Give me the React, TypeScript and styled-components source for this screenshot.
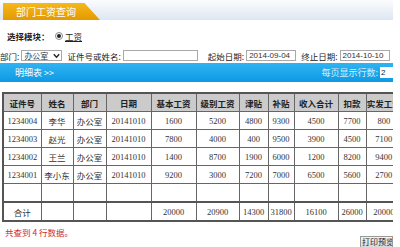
import React from 'react'
import styled, { createGlobalStyle } from 'styled-components'

const GlobalStyle = createGlobalStyle`
  html, body {
    margin: 0;
    padding: 0;
    background: #fff;
  }
  body {
    font-family: "Noto Sans CJK SC", "Liberation Sans", sans-serif;
    color: #222;
  }
`

const Page = styled.div`
  width: 393px;
  height: 247px;
  overflow: hidden;
  background: #fff;
`

const TitleBar = styled.div`
  height: 20px;
  display: flex;
  align-items: flex-end;
  padding-left: 3px;
  background: linear-gradient(#fbfcfe, #dde6f1);
`

const TitleTab = styled.div`
  width: 97px;
  height: 17px;
  box-sizing: border-box;
  padding-left: 13px;
  line-height: 17px;
  font-size: 10px;
  color: #fff;
  background: linear-gradient(#f6b81c, #e39a00);
  clip-path: polygon(0 0, 84% 0, 100% 100%, 0 100%);
`

const ModuleRow = styled.div`
  margin-top: 10px;
  height: 12px;
  padding-left: 7px;
  display: flex;
  align-items: center;
  font-size: 8.5px;
`

const Bold = styled.span`
  font-weight: 700;
  width: 48px;
`

const Radio = styled.span`
  width: 6px;
  height: 6px;
  border-radius: 50%;
  border: 1px solid #888;
  background: #fff;
  display: inline-flex;
  align-items: center;
  justify-content: center;
  margin-right: 2px;

  &::after {
    content: '';
    width: 4px;
    height: 4px;
    border-radius: 50%;
    background: #222;
  }
`

const Underlined = styled.span`
  text-decoration: underline;
`

const FilterRow = styled.div`
  margin-top: 8px;
  height: 11px;
  display: flex;
  align-items: center;
  font-size: 8.5px;
  white-space: nowrap;
`

const Label = styled.span<{ $gap?: number }>`
  margin-left: ${(p) => p.$gap ?? 0}px;
  margin-right: 2px;
`

const Field = styled.span<{ $w: number }>`
  width: ${(p) => p.$w}px;
  height: 11px;
  box-sizing: border-box;
  border: 1px solid #a9a9a9;
  background: #fff;
  font-family: "Liberation Sans", sans-serif;
  font-size: 8px;
  line-height: 9px;
  padding-left: 2px;
  color: #333;
  display: inline-flex;
  align-items: center;
  justify-content: space-between;
  overflow: hidden;
`

const SelectText = styled.span`
  font-family: "Noto Sans CJK SC", sans-serif;
  font-size: 8px;
`

const BlueBar = styled.div`
  margin-top: 2px;
  height: 19px;
  display: flex;
  align-items: center;
  justify-content: space-between;
  background: linear-gradient(#2fb3f2, #0d9ae2);
  font-size: 9px;
  color: #fff;
`

const BarTitle = styled.span`
  padding-left: 15px;
`

const PerPage = styled.span`
  display: flex;
  align-items: center;
  color: #d5ecfb;
  white-space: nowrap;
`

const PerPageBox = styled.span`
  margin-left: 2px;
  width: 12px;
  height: 11px;
  background: #fff;
  color: #222;
  font-family: "Liberation Sans", sans-serif;
  font-size: 8px;
  line-height: 11px;
  padding-left: 1px;
`

const TableWrap = styled.div`
  margin-top: 10px;
  padding-left: 2px;
  width: 420px;
`

const Grid = styled.table`
  border-collapse: collapse;
  table-layout: fixed;
  width: 399px;
  border: 2px solid #555;
`

const Th = styled.th`
  height: 17px;
  padding: 0;
  background: #cbcbcb;
  border: 1px solid #666;
  font-size: 8.5px;
  font-weight: 700;
  white-space: nowrap;
  overflow: hidden;
  text-align: center;
`

const Td = styled.td`
  height: 17px;
  padding: 0;
  border: 1px solid #666;
  font-family: "Liberation Serif", "Noto Sans CJK SC", serif;
  font-size: 8.5px;
  color: #333;
  text-align: center;
  white-space: nowrap;
  overflow: hidden;
`

const TotalRow = styled.tr`
  border-top: 2px solid #555;
`

const Footer = styled.div`
  margin-top: 5px;
  padding-left: 5px;
  font-size: 8.5px;
  color: #d12c2c;
  height: 10px;
  line-height: 10px;
`

const ButtonRow = styled.div`
  display: flex;
  justify-content: flex-end;
  margin-top: -1px;
`

const PrintButton = styled.span`
  width: 33px;
  height: 12px;
  box-sizing: border-box;
  border: 1px solid #999;
  background: linear-gradient(#f4f4f4, #d8d8d8);
  font-size: 8px;
  line-height: 10px;
  white-space: nowrap;
  overflow: hidden;
  color: #222;
  padding-left: 1px;
`

const columns = [38, 32, 33, 45, 45, 43, 29, 26, 44, 28, 36]
const headers = ['证件号', '姓名', '部门', '日期', '基本工资', '级别工资', '津贴', '补贴', '收入合计', '扣款', '实发工资']

const rows = [
  ['1234004', '李华', '办公室', '20141010', '1600', '5200', '4800', '9300', '4500', '7700', '800'],
  ['1234003', '赵光', '办公室', '20141010', '7800', '4000', '400', '9500', '3900', '4500', '7100'],
  ['1234002', '王兰', '办公室', '20141010', '1400', '8700', '1900', '6000', '1200', '8200', '9400'],
  ['1234001', '李小东', '办公室', '20141010', '9200', '3000', '7200', '7000', '6500', '5600', '2700'],
]

const totals = ['合计', '', '', '', '20000', '20900', '14300', '31800', '16100', '26000', '20000']

const Chevron = () => (
  <svg width="7" height="6" viewBox="0 0 7 6" style={{ marginRight: 1, flexShrink: 0 }}>
    <path d="M0.8 1.2 L3.5 4.3 L6.2 1.2" fill="none" stroke="#222" strokeWidth="1.3" />
  </svg>
)

export default function App() {
  return (
    <Page>
      <GlobalStyle />
      <TitleBar>
        <TitleTab>部门工资查询</TitleTab>
      </TitleBar>

      <ModuleRow>
        <Bold>选择模块：</Bold>
        <Radio />
        <Underlined>工资</Underlined>
      </ModuleRow>

      <FilterRow>
        <Label>部门:</Label>
        <Field $w={41}>
          <SelectText>办公室</SelectText>
          <Chevron />
        </Field>
        <Label $gap={5}>证件号或姓名:</Label>
        <Field $w={75} />
        <Label $gap={10}>起始日期:</Label>
        <Field $w={50}>2014-09-04</Field>
        <Label $gap={5}>终止日期:</Label>
        <Field $w={50}>2014-10-10</Field>
      </FilterRow>

      <BlueBar>
        <BarTitle>明细表 &gt;&gt;</BarTitle>
        <PerPage>
          每页显示行数:
          <PerPageBox>2</PerPageBox>
        </PerPage>
      </BlueBar>

      <TableWrap>
        <Grid>
          <colgroup>
            {columns.map((w, i) => (
              <col key={i} style={{ width: w }} />
            ))}
          </colgroup>
          <thead>
            <tr>
              {headers.map((h) => (
                <Th key={h}>{h}</Th>
              ))}
            </tr>
          </thead>
          <tbody>
            {rows.map((r) => (
              <tr key={r[0]}>
                {r.map((c, i) => (
                  <Td key={i}>{c}</Td>
                ))}
              </tr>
            ))}
            <tr>
              {columns.map((_, i) => (
                <Td key={i} />
              ))}
            </tr>
            <TotalRow>
              {totals.map((c, i) => (
                <Td key={i}>{c}</Td>
              ))}
            </TotalRow>
          </tbody>
        </Grid>
      </TableWrap>

      <Footer>共查到 4 行数据。</Footer>
      <ButtonRow>
        <PrintButton>打印预览</PrintButton>
      </ButtonRow>
    </Page>
  )
}
